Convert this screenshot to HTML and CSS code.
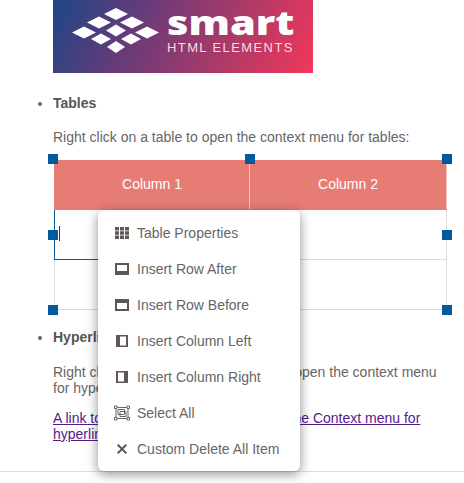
FILE: index.html
```html
<!DOCTYPE html>
<html lang="en">
<head>
    <meta charset="UTF-8">
    <meta name="viewport" content="width=device-width, initial-scale=1.0">
    <title>Editor context menu</title>
    <link rel="stylesheet" href="styles.css">
</head>
<body>
    <div class="editor">
        <div class="logo">
            <svg class="logo-mark" width="100" height="48" viewBox="0 0 100 48">
                <polygon fill="#fff" points="50,2 62,8 50,14 38,8"/>
                <polygon fill="#fff" points="33,10.500 45,16.500 33,22.500 21,16.500"/>
                <polygon fill="#fff" points="66,10.500 78,16.500 66,22.500 54,16.500"/>
                <polygon fill="#fff" points="18,20.500 30,26.500 18,32.500 6,26.500"/>
                <polygon fill="#fff" points="50,18.500 60,24.500 50,30.500 40,24.500"/>
                <polygon fill="#fff" points="81,20.500 93,26.500 81,32.500 69,26.500"/>
                <polygon fill="#fff" points="35,27.500 45,33 35,38.500 25,33"/>
                <polygon fill="#fff" points="65,27.500 75,33 65,38.500 55,33"/>
                <polygon fill="#fff" points="50,35 59,41 50,47 41,41"/>
            </svg>
            <div class="logo-text">
                <div class="logo-name">smart</div>
                <div class="logo-sub">HTML ELEMENTS</div>
            </div>
        </div>

        <ul class="sections">
            <li class="section">
                <strong>Tables</strong>
                <p class="table-intro">Right click on a table to open the context menu for tables:</p>
                <div class="table-wrap">
                    <table class="grid">
                        <colgroup>
                            <col class="first-col">
                            <col>
                        </colgroup>
                        <tr>
                            <th>Column 1</th>
                            <th>Column 2</th>
                        </tr>
                        <tr>
                            <td class="selected"><span class="caret"></span></td>
                            <td></td>
                        </tr>
                        <tr>
                            <td></td>
                            <td></td>
                        </tr>
                    </table>
                    <span class="handle top left"></span>
                    <span class="handle top center"></span>
                    <span class="handle top right"></span>
                    <span class="handle middle left"></span>
                    <span class="handle middle right"></span>
                    <span class="handle bottom left"></span>
                    <span class="handle bottom right"></span>
                </div>
            </li>
            <li class="section links">
                <strong>Hyperlinks</strong>
                <p class="link-intro">Right click on a hyperlink in this text to open the context menu for hyperlinks:</p>
                <p class="link-para"><a href="#">A link to a web site that will then open the Context menu for hyperlinks</a></p>
            </li>
        </ul>
    </div>

    <div class="context-menu">
        <div class="menu-item">
            <svg class="menu-icon" width="16" height="16" viewBox="0 0 16 16"><path d="M1 2h4v3.400H1zM6 2h4v3.400H6zM11 2h4v3.400h-4zM1 6.300h4v3.400H1zM6 6.300h4v3.400H6zM11 6.300h4v3.400h-4zM1 10.600h4V14H1zM6 10.600h4V14H6zM11 10.600h4V14h-4z"/></svg>
            <span>Table Properties</span>
        </div>
        <div class="menu-item">
            <svg class="menu-icon" width="16" height="16" viewBox="0 0 16 16"><path fill-rule="evenodd" d="M1 2h14v12H1zM3 4v6h10V4z"/></svg>
            <span>Insert Row After</span>
        </div>
        <div class="menu-item">
            <svg class="menu-icon" width="16" height="16" viewBox="0 0 16 16"><path fill-rule="evenodd" d="M1 2h14v12H1zM3 6v6h10V6z"/></svg>
            <span>Insert Row Before</span>
        </div>
        <div class="menu-item">
            <svg class="menu-icon" width="16" height="16" viewBox="0 0 16 16"><path fill-rule="evenodd" d="M2 2h12v12H2zM6 3.500v9h6v-9z"/></svg>
            <span>Insert Column Left</span>
        </div>
        <div class="menu-item">
            <svg class="menu-icon" width="16" height="16" viewBox="0 0 16 16"><path fill-rule="evenodd" d="M2 2h12v12H2zM4 3.500v9h6v-9z"/></svg>
            <span>Insert Column Right</span>
        </div>
        <div class="menu-item">
            <svg class="menu-icon" width="16" height="16" viewBox="0 0 16 16"><path fill="none" stroke="#6b6464" d="M2 2.500h12v11H2zM4 4.500h6.500V9.500H4zM6 6.500h6v5H6z"/><path d="M.5 1h2.500v2.500H.5zM13 1h2.500v2.500H13zM.5 12.500h2.500V15H.5zM13 12.500h2.500V15H13z" fill="#fff" stroke="#6b6464"/></svg>
            <span>Select All</span>
        </div>
        <div class="menu-item">
            <svg class="menu-icon" width="16" height="16" viewBox="0 0 16 16"><path d="M3 4.400L4.400 3 8 6.600 11.600 3 13 4.400 9.400 8 13 11.600 11.600 13 8 9.400 4.400 13 3 11.600 6.600 8z"/></svg>
            <span>Custom Delete All Item</span>
        </div>
    </div>
</body>
</html>
```

FILE: styles.css
```css
html, body {
    margin: 0;
    height: 100%;
    overflow: hidden;
    background-color: white;
}
body {
    font-family: "Liberation Sans", Arial, sans-serif;
    font-size: 14px;
    line-height: 16px;
    color: #666;
}
.editor {
    height: 471px;
    border-bottom: 1px solid #ddd;
    overflow: hidden;
}

/* logo */
.logo {
    display: flex;
    width: 260px;
    height: 73px;
    margin-left: 53px;
    background: linear-gradient(115deg, #1e4686 0%, #6d3a78 35%, #b33a66 70%, #f2375a 100%);
}
.logo-mark {
    margin: 6px 0 0 13px;
    flex: none;
}
.logo-text {
    margin-left: 1px;
}
.logo-name {
    margin-top: 5px;
    font-family: "Open Sans", sans-serif;
    font-weight: 800;
    font-size: 34px;
    line-height: 34px;
    color: white;
    transform: scaleX(1.22);
    transform-origin: left;
}
.logo-sub {
    margin-top: 2px;
    font-size: 13px;
    line-height: 14px;
    letter-spacing: 1.4px;
    color: #f6dbe3;
    white-space: nowrap;
}

/* content */
.sections {
    margin: 0;
    padding: 22px 0 0 53px;
}
.section strong {
    color: #555;
}
.links {
    margin-top: 19px;
}
.table-intro {
    margin: 18px 0 15px;
}
.link-intro {
    margin: 19px 25px 14px 0;
}
.link-para {
    margin: 0 40px 0 0;
}
a {
    color: #551a8b;
}

/* table */
.table-wrap {
    position: relative;
    width: 393px;
    margin-left: 1px;
}
.grid {
    width: 393px;
    border-collapse: collapse;
    table-layout: fixed;
}
.first-col {
    width: 195px;
}
.grid th, .grid td {
    height: 49px;
    padding: 0;
    border: 1px solid #dcdcdc;
}
.grid th {
    height: 46px;
    padding-bottom: 2px;
    background-color: #e67c73;
    border-color: #e67c73;
    border-right-color: #f3c4c0;
    color: white;
    font-weight: normal;
}
.grid td.selected {
    position: relative;
    border: 1px solid #0b5a9c;
}
.caret {
    position: absolute;
    left: 4px;
    top: 16px;
    width: 1px;
    height: 15px;
    background-color: #333;
}
.handle {
    position: absolute;
    width: 10px;
    height: 10px;
    background-color: #005a9e;
}
.handle.top { top: -6px; }
.handle.middle { top: 70px; }
.handle.bottom { bottom: -5px; }
.handle.left { left: -6px; }
.handle.center { left: 191px; }
.handle.right { right: -5px; }

/* context menu */
.context-menu {
    position: absolute;
    left: 98px;
    top: 210px;
    width: 202px;
    height: 261px;
    padding-top: 5px;
    box-sizing: border-box;
    background-color: white;
    border-radius: 6px;
    box-shadow: 0 3px 12px rgba(0, 0, 0, 0.45);
}
.menu-item {
    display: flex;
    align-items: center;
    height: 36px;
    padding-left: 16px;
    gap: 7px;
}
.menu-icon {
    flex: none;
    fill: #5f5757;
}
```
